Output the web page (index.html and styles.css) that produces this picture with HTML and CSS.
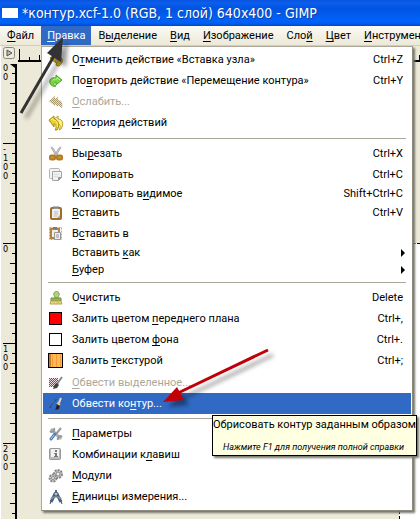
FILE: index.html
```html
<!DOCTYPE html>
<html lang="ru">
<head>
<meta charset="utf-8">
<title>контур.xcf – GIMP</title>
<link rel="stylesheet" href="styles.css">
</head>
<body>
<div class="window">
  <header class="titlebar"><span class="app-mark"></span><h1>*контур.xcf-1.0 (RGB, 1 слой) 640x400 - GIMP</h1></header>
  <nav class="menubar">
    <button><u>Ф</u>айл</button>
    <button class="open"><u>П</u>равка</button>
    <button>В<u>ы</u>деление</button>
    <button><u>В</u>ид</button>
    <button><u>И</u>зображение</button>
    <button>Сло<u>й</u></button>
    <button><u>Ц</u>вет</button>
    <button><u>И</u>нструмент</button>
  </nav>
  <main class="workspace">
    <div class="left-ruler">
      <button class="corner" aria-label="Меню изображения"><svg width="12" height="12" viewBox="0 0 12 12"><rect x=".5" y=".5" width="11" height="11" rx="2" fill="#efecdf" stroke="#88877b"/><path d="M4 3v6l5-3z" fill="#bbb9aa" stroke="#555"/></svg></button>
      <div class="scale">
        <svg class="ticks" width="17" height="455"><defs><pattern id="vt" width="17" height="100" y="79" patternUnits="userSpaceOnUse"><path d="M3 .5h13M12 10.500h4M10 20.500h6M12 30.500h4M10 40.500h6M12 50.500h4M10 60.500h6M12 70.500h4M10 80.500h6M12 90.500h4" stroke="#000"/></pattern></defs><rect width="17" height="455" fill="url(#vt)"/><path d="M16 0v455" stroke="#000" stroke-width="2"/><path d="M10 0h5v4z"/></svg>
        <div class="label first">0<br>0</div>
        <div class="label">-<br>1<br>0<br>0</div>
        <div class="label">0</div>
        <div class="label">1<br>0<br>0</div>
        <div class="label">2<br>0<br>0</div>
      </div>
    </div>
    <div class="view">
      <svg class="top-ruler" height="16" width="100%"><defs><pattern id="ht" width="20" height="16" x="2" patternUnits="userSpaceOnUse"><path d="M.5 9v5M10.500 11v3" stroke="#000"/></pattern></defs><rect width="100%" height="16" fill="url(#ht)"/><path d="M2.500 3v11" stroke="#000"/><path d="M1 15h500" stroke="#000" stroke-width="2"/></svg>
      <div class="canvas"><div class="image"></div></div>
    </div>
  </main>

  <div class="menu" role="menu">
    <button class="item"><svg viewBox="0 0 16 16"><path d="M2 6l6-5v3c5 0 7 3 6 6-1 2-2 4-4 4l-2-1 1-3c2-1 1-3-1-2v3z" fill="#ddb529" stroke="#9c7a12"/></svg><span>О<u>т</u>менить действие «Вставка узла»</span><kbd>Ctrl+Z</kbd></button>
    <button class="item"><svg viewBox="0 0 16 16"><path d="M14 7L8 2v3C3 4 1 7 2 10c1 3 4 4 6 3-3-1-3-3 0-4v3z" fill="#7ada45" stroke="#4aa32d"/><path d="M4 8c1-2 3-2 5-2V4.500L12 7" fill="none" stroke="#b6f28a"/></svg><span>По<u>в</u>торить действие «Перемещение контура»</span><kbd>Ctrl+Y</kbd></button>
    <button class="item off"><svg viewBox="0 0 16 16"><path d="M1 7l6-5v3l3-2v3c4 0 5 4 4 8l-4-3v2l-3-3v2z" fill="#e4dcc4"/><defs><pattern id="dots" width="2" height="2" patternUnits="userSpaceOnUse"><path d="M0 0h1v1H0zM1 1h1v1H1z" fill="#a8976a"/></pattern></defs><path d="M1 7l6-5v3l3-2v3c4 0 5 4 4 8l-4-3v2l-3-3v2z" fill="url(#dots)"/></svg><span><u>О</u>слабить...</span></button>
    <button class="item tall"><svg viewBox="0 0 16 16"><path d="M5 5l5-4v3c5 0 6 5 3 10l-2 1c2-4 1-6-1-6v3z" fill="#fbf08a" stroke="#b7a022"/><path d="M1 5l5-4v3c5 1 6 7 3 11H7c2-3 1-6-1-6v3z" fill="#ead02c" stroke="#a68d13"/><path d="M3 5l2-1.500V5c4 0 5 4 4 7" fill="none" stroke="#fff08a"/></svg><span><u>И</u>стория действий</span></button>
    <hr>
    <button class="item"><svg viewBox="0 0 16 16"><path d="M3 1l2 1 5 8H8zM13 1l-2 1-5 8h2z" fill="#d9d9d6" stroke="#aaa"/><rect x="2" y="9.500" width="5" height="4" rx="1.500" fill="#cc9433" stroke="#b27a20" stroke-width="2"/><rect x="9" y="9.500" width="5" height="4" rx="1.500" fill="#cc9433" stroke="#b27a20" stroke-width="2"/></svg><span>Вы<u>р</u>езать</span><kbd>Ctrl+X</kbd></button>
    <button class="item"><svg viewBox="0 0 16 16"><rect x="1.500" y="1.500" width="10" height="10" rx="1" fill="#f4f4f2" stroke="#b5b5b5"/><path d="M4.500 4.500h9v6l-3 3h-6z" fill="#f0f0f0" stroke="#a5a5a5"/><path d="M13.500 10.500l-3 3v-3z" fill="#999" stroke="#999"/><path d="M6 7.500h5M6 9.500h4" fill="none" stroke="#ddd"/></svg><span><u>К</u>опировать</span><kbd>Ctrl+C</kbd></button>
    <button class="item short"><i></i><span>Копировать в<u>и</u>димое</span><kbd>Shift+Ctrl+C</kbd></button>
    <button class="item"><svg viewBox="0 0 16 16"><rect x="3" y="3" width="10" height="11" rx="1" fill="#eee" stroke="#a16d27" stroke-width="2"/><path d="M5 4V2h6v2" fill="#999" stroke="#777"/><path d="M6 7h4M6 9h4M6 11h3" stroke="#bbb"/><path d="M9 13l3-3v3z" fill="#aaa"/></svg><span><u>В</u>ставить</span><kbd>Ctrl+V</kbd></button>
    <button class="item"><svg viewBox="0 0 16 16"><rect x="1.500" y="1.500" width="12" height="12" fill="none" stroke="#aaa" stroke-dasharray="2 1"/><rect x="3" y="3" width="8" height="9" fill="#eee" stroke="#b98137" stroke-width="2"/><path d="M5 3V1h4v2z" fill="#777"/><path d="M6.500 6.500h6v7h-6zM8 9h3M8 11h3" fill="#eee" stroke="#999"/></svg><span>В<u>с</u>тавить в</span></button>
    <button class="item short"><i></i><span>Вставить <u>к</u>ак</span><b class="submenu"></b></button>
    <button class="item short"><i></i><span><u>Б</u>уфер</span><b class="submenu"></b></button>
    <hr>
    <button class="item"><svg viewBox="0 0 16 16"><path d="M7 8c0-2-2-3-1-5s4-2 5 0-1 3-1 5z" fill="#b4d37c" stroke="#799c49"/><path d="M3 8h10v3H3z" fill="#91b75c" stroke="#71914a"/><path d="M3 11h10l1 3H2z" fill="#f3df7c" stroke="#b4a052"/><path d="M6 12v2M9 12v2M11 12v2" stroke="#c8b55c"/></svg><span>О<u>ч</u>истить</span><kbd>Delete</kbd></button>
    <button class="item"><svg viewBox="0 0 16 16"><rect x="1.500" y="1.500" width="12" height="12" fill="#f00" stroke="#000"/></svg><span>Залить цветом <u>п</u>ереднего плана</span><kbd>Ctrl+,</kbd></button>
    <button class="item"><svg viewBox="0 0 16 16"><rect x="1.500" y="1.500" width="12" height="12" fill="#fff" stroke="#000"/></svg><span>Залить цветом <u>ф</u>она</span><kbd>Ctrl+.</kbd></button>
    <button class="item tall"><svg viewBox="0 0 16 16"><rect x=".5" y=".5" width="14" height="14" fill="#ffba57" stroke="#000"/><path d="M2 1v13" stroke="#c87b24" stroke-width="2"/><path d="M4.500 1v13M8.500 1v13M12.500 1v13" stroke="#f59b36"/></svg><span>Залить <u>т</u>екстурой</span><kbd>Ctrl+;</kbd></button>
    <button class="item off"><svg viewBox="0 0 16 16"><path d="M1 3h9v7l-2 2H1z" fill="#e9d9da"/><defs><pattern id="red" width="2" height="2" patternUnits="userSpaceOnUse"><path d="M0 0h1v1H0zM1 1h1v1H1z" fill="#8c4a50"/></pattern></defs><path d="M1 3h9v7l-2 2H1z" fill="url(#red)"/><path d="M14 2L9 9" stroke="#888" stroke-width="2"/><path d="M9 8l2 2-2 3-4 1 2-5z" fill="#444"/></svg><span><u>О</u>бвести выделенное...</span></button>
    <button class="item selected"><svg viewBox="0 0 16 16"><path d="M2 12c2-5 4-7 7-9" fill="none" stroke="#1d3764" stroke-dasharray="2 1"/><path d="M3 5l3 3M3 8l3-3" stroke="#506d93"/><path d="M13 2l-3 7" stroke="#ddd5b5" stroke-width="2"/><path d="M9 7l3 2-1 4-4 1 1-2z" fill="#222"/><path d="M9 7l3 2" stroke="#f1c175" stroke-width="2"/></svg><span>Обвести ко<u>н</u>тур...</span></button>
    <hr>
    <button class="item"><svg viewBox="0 0 16 16"><path d="M3 3l10 10" stroke="#b0b0b0" stroke-width="3"/><path d="M2 5c2 2 5 0 4-3M10 14c-1-3 2-5 4-3" fill="none" stroke="#999" stroke-width="2"/><path d="M13 2L8 8" stroke="#999" stroke-width="2"/><path d="M7 8l-4 5" stroke="#4f83bf" stroke-width="3" stroke-linecap="round"/><path d="M6 9l-3 4" stroke="#a5c9ee"/></svg><span><u>П</u>араметры</span></button>
    <button class="item"><svg viewBox="0 0 16 16"><rect x="1.500" y="1.500" width="11" height="11" rx="1" fill="#bbb" stroke="#999"/><path d="M3 2h8v8H3z" fill="#f2f2f0"/><path d="M7 3h2v2H7zM6 6h3v3h1v1H6V9h1V7H6z" fill="#777"/></svg><span>Комбинации к<u>л</u>авиш</span></button>
    <button class="item"><svg viewBox="0 0 16 16"><circle cx="10" cy="6" r="4" fill="#ccc" stroke="#888" stroke-width="2" stroke-dasharray="2 1"/><circle cx="10" cy="6" r="2" fill="#eee" stroke="#888"/><circle cx="5" cy="10" r="3.500" fill="#ccc" stroke="#888" stroke-width="2" stroke-dasharray="2 1"/><circle cx="5" cy="10" r="1.500" fill="#eee" stroke="#888"/></svg><span><u>М</u>одули</span></button>
    <button class="item tall"><svg viewBox="0 0 16 16"><path d="M8 1v3" stroke="#667" stroke-width="2"/><path d="M7 5L3 13M9 5l4 8" stroke="#386294" stroke-width="3"/><path d="M3 10c3-3 7-3 10 0" fill="none" stroke="#888" stroke-width="2"/><path d="M3 12l-1 3M13 12l1 3" stroke="#555"/><circle cx="8" cy="5" r="2" fill="#a8c3dd" stroke="#456"/></svg><span><u>Е</u>диницы измерения...</span></button>
  </div>

  <div class="tooltip" role="tooltip"><p>Обрисовать контур заданным образом</p><p class="hint">Нажмите F1 для получения полной справки</p></div>
  <svg class="pointers" width="420" height="519" viewBox="0 0 420 519">
    <g class="cast"><path d="M21 113L54 56" fill="none" stroke="#333" stroke-width="3"/><path d="M63 37L47 53l14 9z" fill="#333"/></g>
    <g class="cast"><path d="M268 350L178 393" fill="none" stroke="#c00008" stroke-width="3"/><path d="M163 402l14-15 7 13z" fill="#c00008"/></g>
  </svg>
</div>
</body>
</html>
```
FILE: styles.css
```css
* { box-sizing: border-box; }
body {
  margin: 0;
  font: 11px/16px Roboto, Tahoma, sans-serif;
  color: #000;
}
button {
  margin: 0;
  padding: 0;
  border: 0;
  background: none;
  font: inherit;
  color: inherit;
  white-space: nowrap;
}
u { text-underline-offset: 2px; text-decoration-thickness: 1px; text-decoration-skip-ink: none; }
.window {
  position: relative;
  display: flex;
  flex-direction: column;
  min-height: 100vh;
  overflow: hidden;
  background: #ece9d8;
}
.titlebar {
  display: flex;
  align-items: center;
  gap: 4px;
  height: 26px;
  padding: 0 2px;
  background: linear-gradient(#0a54dd 0, #0a5ff0 3px, #0054e0 8px, #0062fa 20px, #0060f4 23px, #0046c8 26px);
}
.app-mark { flex: none; width: 16px; height: 10px; background: #fff; }
h1 {
  margin: 0;
  font: 500 14px/20px "DejaVu Sans Condensed", sans-serif;
  color: #fff;
  text-shadow: 1px 1px #123b9c;
  white-space: nowrap;
}
.menubar {
  display: flex;
  gap: 1px;
  height: 20px;
  padding-left: 1px;
  background: linear-gradient(#fbfaf6, #ece9d8);
  border-bottom: 1px solid #d2cfbe;
}
.menubar button { padding: 0 6px; line-height: 20px; }
.menubar .open { background: #316ac5; color: #fff; }
.workspace { display: flex; flex: 1; }
.left-ruler { width: 17px; border-left: 1px solid #fff; }
.corner { display: flex; width: 16px; height: 18px; padding: 1px 2px; }
.scale { position: relative; height: 455px; }
.ticks { position: absolute; left: -1px; top: 0; }
.label {
  height: 100px;
  padding: 2px 0 0 2px;
  font: 9px/9px "DejaVu Sans Condensed", sans-serif;
}
.label.first { height: 79px; padding-top: 0; }
.view { display: flex; flex: 1; flex-direction: column; min-width: 0; }
.top-ruler { display: block; }
.canvas { flex: 1; display: flex; padding: 181px 0 0 382px; }
.image {
  flex: 1;
  background: #fff;
  border-top: 1px dashed #000;
  border-left: 1px dashed #000;
}
.menu {
  position: absolute;
  left: 41px;
  right: 7px;
  top: 46px;
  padding: 2px 1px;
  background: #fff;
  border: 1px solid #aca899;
  border-right-color: #8d8a7c;
  border-bottom-color: #8d8a7c;
  box-shadow: 2px 2px 2px #77776f;
}
.item {
  display: flex;
  align-items: center;
  width: 100%;
  height: 21px;
  padding: 0 8px 0 5px;
  text-align: left;
}
.item.tall { height: 22px; }
.item.short { height: 17px; }
.item svg, .item i { flex: none; width: 16px; height: 16px; margin-right: 8px; }
.item span { flex: 1; }
.item.off { color: #aca899; }
.item.selected { background: #316ac5; color: #fff; }
kbd { font: inherit; }
.submenu {
  border: 4px solid transparent;
  border-left-color: #000;
  border-right: 0;
  margin-right: -2px;
}
hr { height: 1px; margin: 4px 5px; border: 0; background: #aca899; }
.tooltip {
  position: absolute;
  right: 3px;
  top: 415px;
  white-space: nowrap;
  background: #ffffe1;
  border: 1px solid #000;
  box-shadow: 2px 2px 2px #77776f;
}
.tooltip p { margin: 0; line-height: 18px; }
.tooltip .hint { padding: 5px 0 0 10px; font-size: 9px; line-height: 16px; font-style: italic; }
.pointers { position: absolute; left: 0; top: 0; pointer-events: none; }
.cast { filter: drop-shadow(5px 5px 2px #0006); }
```
